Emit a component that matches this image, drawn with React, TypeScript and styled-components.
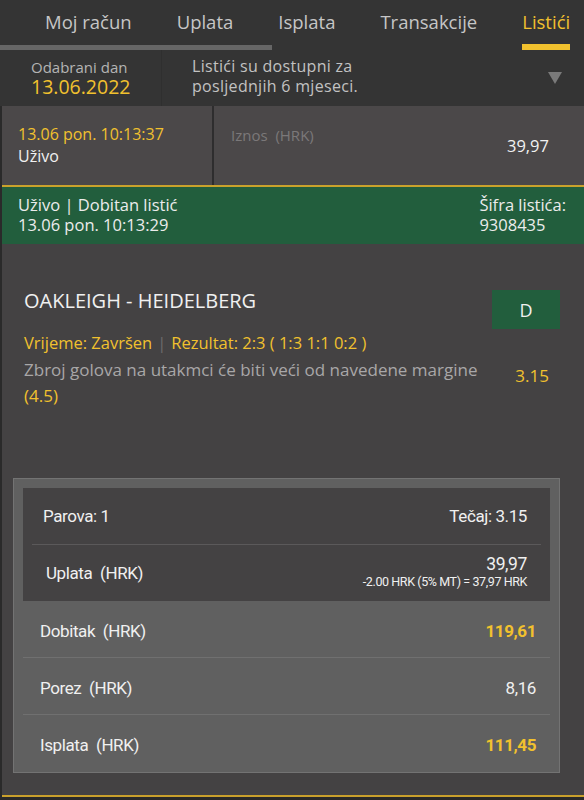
import React from "react";
import styled, { createGlobalStyle } from "styled-components";

const GlobalStyle = createGlobalStyle`
  html, body { margin: 0; padding: 0; background: #343434; }
  body { font-family: "Open Sans", Lato, sans-serif; -webkit-font-smoothing: antialiased; }
  * { box-sizing: border-box; }
`;

const YELLOW = "#f1c12e";

const Page = styled.div`
  width: 584px;
  height: 800px;
  overflow: hidden;
  display: flex;
  flex-direction: column;
  background: #343434;
`;

const TabBar = styled.nav`
  position: relative;
  display: flex;
  gap: 45px;
  padding-left: 45px;
  height: 50px;
`;

const ScrollThumb = styled.div`
  position: absolute;
  left: 0;
  bottom: 0;
  width: 272px;
  height: 5px;
  background: #666666;
`;

const Tab = styled.div<{ $active?: boolean }>`
  height: 50px;
  padding-top: 9px;
  font-size: 18.5px;
  line-height: 26px;
  white-space: nowrap;
  color: ${(p) => (p.$active ? YELLOW : "#c6c6c6")};
  border-bottom: 6px solid ${(p) => (p.$active ? YELLOW : "transparent")};
`;

const DateBar = styled.div`
  display: flex;
  align-items: stretch;
  height: 56px;
`;

const DateBlock = styled.div`
  width: 162px;
  padding: 8px 0 0 31px;
  border-right: 1px solid #2f2f2f;
  display: flex;
  flex-direction: column;
`;

const DateLabel = styled.span`
  font-size: 15px;
  line-height: 18px;
  color: #b4b4b4;
`;

const DateValue = styled.span`
  font-size: 19.5px;
  line-height: 22px;
  color: ${YELLOW};
`;

const InfoText = styled.div`
  flex: 1;
  padding: 6px 0 0 30px;
  font-size: 16px;
  line-height: 20px;
  letter-spacing: 0.3px;
  color: #c2c2c2;
`;

const ArrowBox = styled.div`
  width: 50px;
  display: flex;
  align-items: flex-start;
  padding-top: 22px;
  padding-left: 14px;
`;

const Body = styled.div`
  flex: 1;
  display: flex;
  flex-direction: column;
  padding-left: 2px;
  background: #2a2a2a;
`;

const TicketRow = styled.div`
  display: grid;
  grid-template-columns: 210px 1fr;
  gap: 2px;
  height: 79px;
  background: #2e2d2e;
`;

const Cell = styled.div`
  background: #4b4849;
  display: flex;
`;

const TimeCell = styled(Cell)`
  flex-direction: column;
  padding: 17px 0 0 16px;
  font-size: 16px;
  line-height: 22px;
`;

const AmountCell = styled(Cell)`
  justify-content: space-between;
  align-items: center;
  padding: 0 35px 0 17px;
`;

const Yellow = styled.span`
  color: ${YELLOW};
`;

const White = styled.span`
  color: #f0f0f0;
`;

const MutedLabel = styled.span`
  align-self: flex-start;
  margin-top: 18px;
  font-size: 15px;
  line-height: 22px;
  white-space: pre;
  color: #7b7879;
`;

const Amount = styled.span`
  font-size: 16.5px;
  color: #f2f2f2;
`;

const StatusBand = styled.div`
  height: 59px;
  border-top: 2px solid #caa22c;
  background: #225e3d;
  display: flex;
  justify-content: space-between;
  padding: 8px 18px 0 16px;
  font-size: 16.5px;
  line-height: 20px;
  color: #ececec;
`;

const StatusCol = styled.div`
  display: flex;
  flex-direction: column;
`;

const Section = styled.div`
  flex: 1;
  background: #444243;
  display: flex;
  flex-direction: column;
  padding-top: 46px;
  border-bottom: 2px solid #c9a02c;
  margin-bottom: 3px;
`;

const MatchHeader = styled.div`
  display: flex;
  justify-content: space-between;
  align-items: flex-start;
  padding: 0 24px 0 22px;
`;

const MatchTitle = styled.div`
  margin-top: -2px;
  font-size: 20px;
  line-height: 26px;
  color: #f0f0f0;
`;

const PickBadge = styled.div`
  width: 68px;
  height: 39px;
  background: #225e3d;
  color: #f0f0f0;
  font-size: 18px;
  display: flex;
  align-items: center;
  justify-content: center;
`;

const StatusLine = styled.div`
  padding-left: 22px;
  font-size: 16.5px;
  line-height: 28px;
  color: ${YELLOW};
`;

const Sep = styled.span`
  color: #6f6c6d;
  margin: 0 5px;
`;

const Market = styled.div`
  display: flex;
  justify-content: space-between;
  padding: 0 35px 0 22px;
`;

const MarketText = styled.div`
  width: 462px;
  font-size: 17px;
  line-height: 26px;
  color: #a9a7a8;
`;

const Odds = styled.div`
  margin-top: 6px;
  font-size: 17px;
  line-height: 26px;
  color: ${YELLOW};
`;

const SummaryBox = styled.div`
  margin: 69px 24px 0 11px;
  border: 1px solid #737373;
  background: #606060;
  padding: 9px 9px 1px 9px;
  font-family: Roboto, Lato, sans-serif;
  letter-spacing: -0.4px;
`;

const SummaryInner = styled.div`
  background: #444243;
  display: flex;
  flex-direction: column;
`;

const SummaryRow = styled.div<{ $pl: number; $pr: number; $divider?: string; $pt?: number }>`
  height: ${(p) => (p.$divider ? 57 : 56)}px;
  display: flex;
  align-items: center;
  justify-content: space-between;
  padding: ${(p) => p.$pt ?? 0}px ${(p) => p.$pr}px 0 ${(p) => p.$pl}px;
  font-size: 17px;
  color: #f0f0f0;
  border-bottom: ${(p) => (p.$divider ? `1px solid ${p.$divider}` : "none")};
`;

const InnerDivider = styled.div`
  height: 1px;
  margin: 0 9px;
  background: #5b595a;
`;

const Label = styled.span`
  white-space: pre;
`;

const ValueStack = styled.div`
  display: flex;
  flex-direction: column;
  align-items: flex-end;
  margin-top: -2px;
`;

const BigValue = styled.span`
  font-size: 17.5px;
  line-height: 20px;
`;

const SmallNote = styled.span`
  font-size: 12.5px;
  line-height: 16px;
`;

const Highlight = styled.span<{ $yellow?: boolean }>`
  font-weight: ${(p) => (p.$yellow ? 700 : 400)};
  color: ${(p) => (p.$yellow ? YELLOW : "#f0f0f0")};
`;

export default function App() {
  const tabs = ["Moj račun", "Uplata", "Isplata", "Transakcije", "Listići"];
  return (
    <Page>
      <GlobalStyle />
      <TabBar>
        {tabs.map((t) => (
          <Tab key={t} $active={t === "Listići"}>
            {t}
          </Tab>
        ))}
        <ScrollThumb />
      </TabBar>
      <DateBar>
        <DateBlock>
          <DateLabel>Odabrani dan</DateLabel>
          <DateValue>13.06.2022</DateValue>
        </DateBlock>
        <InfoText>
          Listići su dostupni za
          <br />
          posljednjih 6 mjeseci.
        </InfoText>
        <ArrowBox>
          <svg width="14" height="12" viewBox="0 0 14 12">
            <polygon points="0,0 14,0 7,12" fill="#7a7a7a" />
          </svg>
        </ArrowBox>
      </DateBar>
      <Body>
        <TicketRow>
          <TimeCell>
            <Yellow>13.06 pon. 10:13:37</Yellow>
            <White>Uživo</White>
          </TimeCell>
          <AmountCell>
            <MutedLabel>{"Iznos  (HRK)"}</MutedLabel>
            <Amount>39,97</Amount>
          </AmountCell>
        </TicketRow>
        <StatusBand>
          <StatusCol>
            <span>Uživo | Dobitan listić</span>
            <span>13.06 pon. 10:13:29</span>
          </StatusCol>
          <StatusCol>
            <span>Šifra listića:</span>
            <span>9308435</span>
          </StatusCol>
        </StatusBand>
        <Section>
          <MatchHeader>
            <MatchTitle>OAKLEIGH - HEIDELBERG</MatchTitle>
            <PickBadge>D</PickBadge>
          </MatchHeader>
          <StatusLine>
            Vrijeme: Završen<Sep>|</Sep>Rezultat: 2:3 ( 1:3 1:1 0:2 )
          </StatusLine>
          <Market>
            <MarketText>
              Zbroj golova na utakmci će biti veći od navedene margine <Yellow>(4.5)</Yellow>
            </MarketText>
            <Odds>3.15</Odds>
          </Market>
          <SummaryBox>
            <SummaryInner>
              <SummaryRow $pl={20} $pr={23}>
                <Label>Parova: 1</Label>
                <span>Tečaj: 3.15</span>
              </SummaryRow>
              <InnerDivider />
              <SummaryRow $pl={23} $pr={23}>
                <Label>{"Uplata  (HRK)"}</Label>
                <ValueStack>
                  <BigValue>39,97</BigValue>
                  <SmallNote>-2.00 HRK (5% MT) = 37,97 HRK</SmallNote>
                </ValueStack>
              </SummaryRow>
            </SummaryInner>
            <SummaryRow $pl={17} $pr={14} $pt={3} $divider="#707070">
              <Label>{"Dobitak  (HRK)"}</Label>
              <Highlight $yellow>119,61</Highlight>
            </SummaryRow>
            <SummaryRow $pl={17} $pr={14} $pt={3} $divider="#707070">
              <Label>{"Porez  (HRK)"}</Label>
              <Highlight>8,16</Highlight>
            </SummaryRow>
            <SummaryRow $pl={17} $pr={14} $pt={3}>
              <Label>{"Isplata  (HRK)"}</Label>
              <Highlight $yellow>111,45</Highlight>
            </SummaryRow>
          </SummaryBox>
        </Section>
      </Body>
    </Page>
  );
}
